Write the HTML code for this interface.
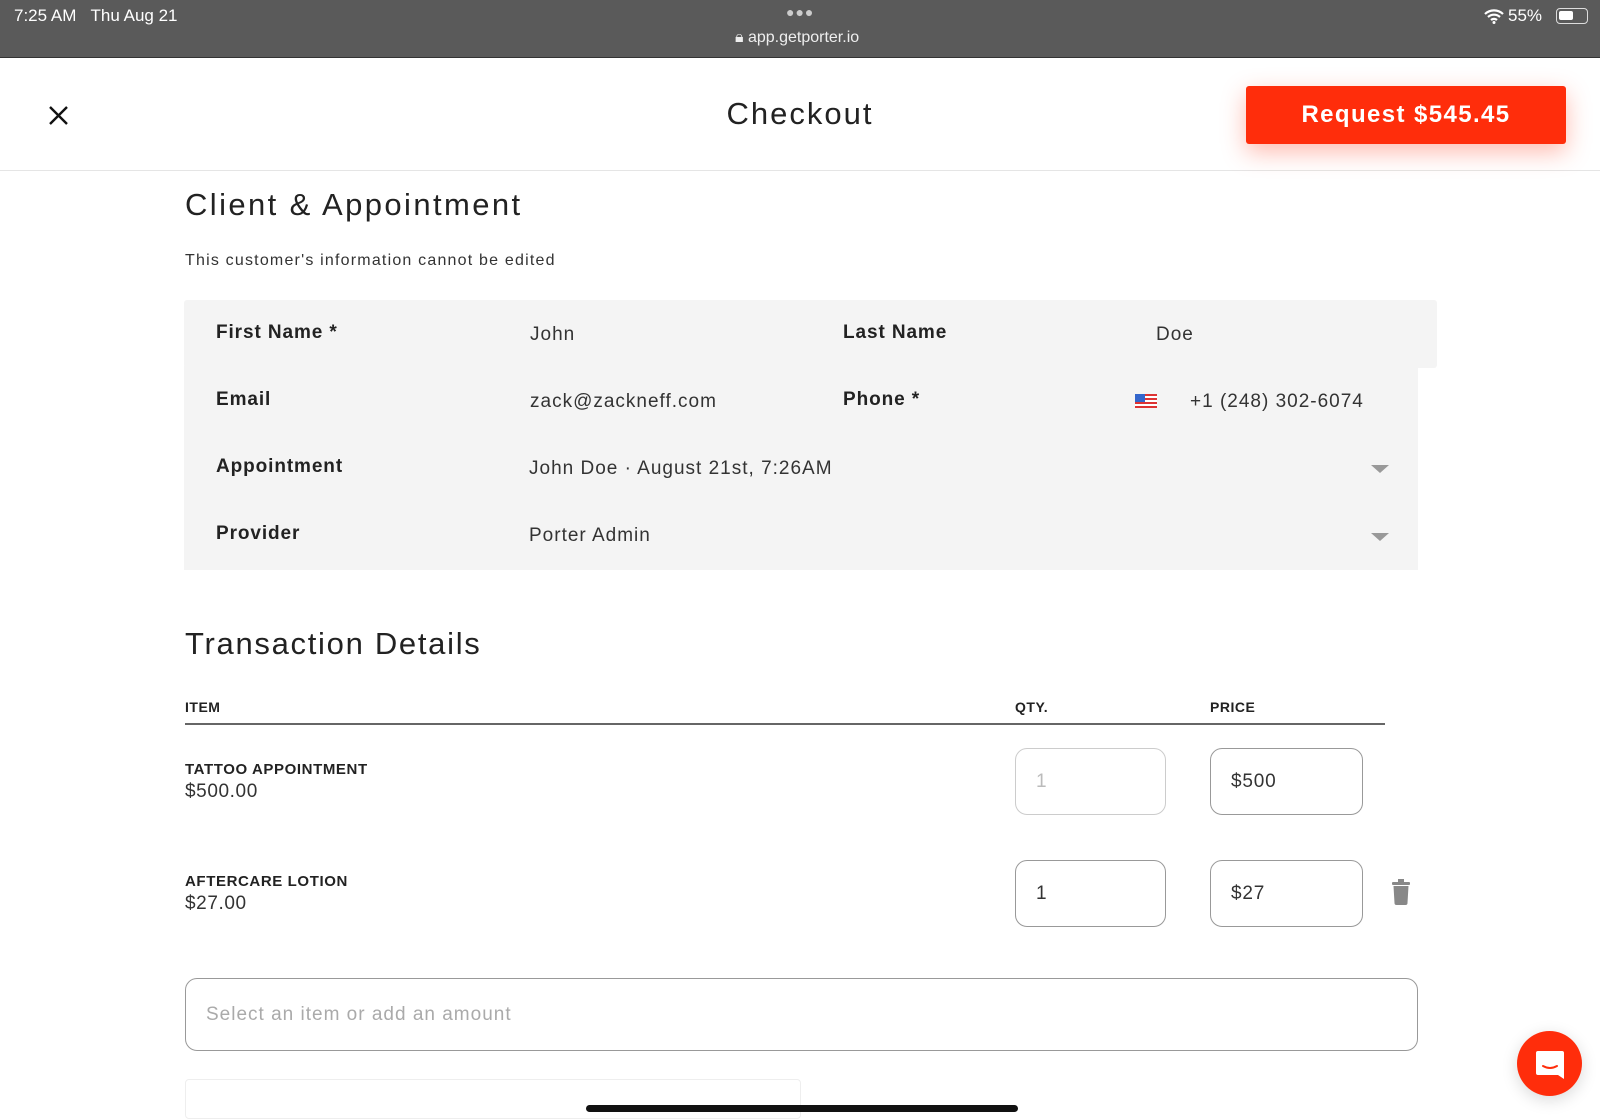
<!DOCTYPE html>
<html><head><style>
*{box-sizing:border-box;margin:0;padding:0}
body{width:1600px;height:1113px;overflow:hidden;background:#fff;font-family:"Liberation Sans",sans-serif;color:#222;position:relative}
.a{position:absolute;white-space:nowrap}
.sb{position:absolute;left:0;top:0;width:1600px;height:58px;background:#5a5a5a;color:#fff;border-bottom:1px solid #333}
.lbl{font-size:19px;font-weight:bold;color:#222;letter-spacing:0.9px}
.val{font-size:19px;color:#333;letter-spacing:1px}
.box{position:absolute;border:1.5px solid #999;border-radius:12px;background:#fff}
.in{font-size:19px;color:#333;letter-spacing:0.8px}
.arrow{position:absolute;width:0;height:0;border-left:9px solid transparent;border-right:9px solid transparent;border-top:8px solid #999}
</style></head><body>
<div class="sb">
<div class="a" style="left:14px;top:6px;font-size:17px">7:25 AM&nbsp;&nbsp;&nbsp;Thu Aug 21</div>
<div class="a" style="left:786px;top:4px;font-size:14px;color:#ccc;letter-spacing:1px">●●●</div>
<div class="a" style="left:735px;top:29px;font-size:16px;color:#eee">🔒︎ app.getporter.io</div>
<div class="a" style="left:1508px;top:6px;font-size:17px">55%</div>
<div class="a" style="left:1556px;top:8px;width:32px;height:16px;border:1.5px solid #ddd;border-radius:4px"><div style="margin:2px;width:14px;height:9px;background:#fff;border-radius:2px"></div></div>
<svg class="a" style="left:1484px;top:8px" width="20" height="16" viewBox="0 0 20 16"><path d="M1 6a13 13 0 0118 0M4 9a9 9 0 0112 0M7 12a4.5 4.5 0 016 0" stroke="#fff" stroke-width="2.2" fill="none"/><circle cx="10" cy="14.5" r="1.5" fill="#fff"/></svg>
</div>
<div class="a" style="left:0;top:170px;width:1600px;height:1px;background:#e5e5e5"></div>
<svg class="a" style="left:48px;top:105px" width="21" height="21" viewBox="0 0 21 21"><path d="M2 2L19 19M19 2L2 19" stroke="#111" stroke-width="2.4"/></svg>
<div class="a" style="left:0;width:1600px;text-align:center;top:96px;font-size:31px;color:#222;letter-spacing:2px">Checkout</div>
<div class="a" style="left:1246px;top:86px;width:320px;height:58px;background:#ff2d0b;border-radius:3px;color:#fff;font-size:24px;font-weight:bold;text-align:center;line-height:58px;letter-spacing:1.4px;box-shadow:0 8px 24px rgba(255,60,30,.35)">Request $545.45</div>

<div class="a" style="left:185px;top:187px;font-size:31px;color:#222;letter-spacing:2.4px">Client &amp; Appointment</div>
<div class="a" style="left:185px;top:252px;font-size:16px;color:#333;letter-spacing:1.2px">This customer's information cannot be edited</div>
<div class="a" style="left:184px;top:300px;width:1253px;height:68px;background:#f4f4f4;border-radius:3px"></div>
<div class="a" style="left:184px;top:366px;width:1234px;height:204px;background:#f4f4f4"></div>
<div class="a lbl" style="left:216px;top:322px">First Name *</div>
<div class="a val" style="left:530px;top:324px">John</div>
<div class="a lbl" style="left:843px;top:322px">Last Name</div>
<div class="a val" style="left:1156px;top:324px">Doe</div>
<div class="a lbl" style="left:216px;top:389px">Email</div>
<div class="a val" style="left:530px;top:391px">zack@zackneff.com</div>
<div class="a lbl" style="left:843px;top:389px">Phone *</div>
<svg class="a" style="left:1135px;top:394px" width="22" height="14" viewBox="0 0 22 14"><rect width="22" height="14" fill="#d33"/><rect y="2" width="22" height="2" fill="#fff"/><rect y="6" width="22" height="2" fill="#fff"/><rect y="10" width="22" height="2" fill="#fff"/><rect width="10" height="8" fill="#36c"/></svg>
<div class="a val" style="left:1190px;top:391px">+1 (248) 302-6074</div>
<div class="a lbl" style="left:216px;top:456px">Appointment</div>
<div class="a val" style="left:529px;top:458px">John Doe · August 21st, 7:26AM</div>
<div class="arrow" style="left:1371px;top:465px"></div>
<div class="a lbl" style="left:216px;top:523px">Provider</div>
<div class="a val" style="left:529px;top:525px">Porter Admin</div>
<div class="arrow" style="left:1371px;top:533px"></div>

<div class="a" style="left:185px;top:626px;font-size:31px;color:#222;letter-spacing:1.7px">Transaction Details</div>
<div class="a" style="left:185px;top:699px;font-size:14px;font-weight:bold;letter-spacing:0.5px">ITEM</div>
<div class="a" style="left:1015px;top:699px;font-size:14px;font-weight:bold;letter-spacing:0.5px">QTY.</div>
<div class="a" style="left:1210px;top:699px;font-size:14px;font-weight:bold;letter-spacing:0.5px">PRICE</div>
<div class="a" style="left:185px;top:723px;width:1200px;height:2px;background:#666"></div>

<div class="a" style="left:185px;top:761px;font-size:15px;font-weight:bold;letter-spacing:0.6px">TATTOO APPOINTMENT</div>
<div class="a" style="left:185px;top:781px;font-size:19px;color:#333;letter-spacing:0.6px">$500.00</div>
<div class="box" style="left:1015px;top:748px;width:151px;height:67px;border-color:#ccc"></div>
<div class="a in" style="left:1036px;top:771px;color:#bbb">1</div>
<div class="box" style="left:1210px;top:748px;width:153px;height:67px"></div>
<div class="a in" style="left:1231px;top:771px">$500</div>

<div class="a" style="left:185px;top:873px;font-size:15px;font-weight:bold;letter-spacing:0.6px">AFTERCARE LOTION</div>
<div class="a" style="left:185px;top:893px;font-size:19px;color:#333;letter-spacing:0.6px">$27.00</div>
<div class="box" style="left:1015px;top:860px;width:151px;height:67px"></div>
<div class="a in" style="left:1036px;top:883px">1</div>
<div class="box" style="left:1210px;top:860px;width:153px;height:67px"></div>
<div class="a in" style="left:1231px;top:883px">$27</div>
<svg class="a" style="left:1391px;top:879px" width="20" height="26" viewBox="0 0 20 26"><rect x="1" y="3" width="18" height="3" rx="1" fill="#888"/><rect x="7" y="0" width="6" height="3" fill="#888"/><path d="M2.5 7h15l-1 17a2 2 0 01-2 2h-9a2 2 0 01-2-2z" fill="#888"/></svg>

<div class="box" style="left:185px;top:978px;width:1233px;height:73px"></div>
<div class="a" style="left:206px;top:1004px;font-size:19px;color:#aaa;letter-spacing:1px">Select an item or add an amount</div>
<div class="a" style="left:185px;top:1079px;width:616px;height:40px;border:1px solid #eee;border-radius:4px"></div>
<div class="a" style="left:586px;top:1105px;width:432px;height:7px;background:#111;border-radius:4px"></div>
<div class="a" style="left:1517px;top:1031px;width:65px;height:65px;border-radius:50%;background:#ff2d0b;box-shadow:0 4px 16px rgba(0,0,0,.15)"></div>
<svg class="a" style="left:1534px;top:1049px" width="32" height="32" viewBox="0 0 32 32"><path d="M4 2h24a2 2 0 012 2v26l-6-4H4a2 2 0 01-2-2V4a2 2 0 012-2z" fill="#fff"/><path d="M9 17q7 4 14 0" stroke="#ff2d0b" stroke-width="2" fill="none" stroke-linecap="round"/></svg>
</body></html>
